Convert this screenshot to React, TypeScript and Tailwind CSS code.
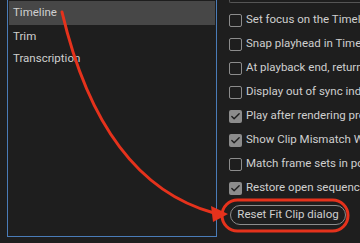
import { Check } from 'lucide-react';

const options = [
    { label: 'Set focus on the Timeline when performing Insert/Overwrite', checked: false },
    { label: 'Snap playhead in Timeline when Snap is enabled', checked: false },
    { label: 'At playback end, return to beginning when restarting playback', checked: false },
    { label: 'Display out of sync indicators for unlinked clips', checked: false },
    { label: 'Play after rendering previews', checked: true },
    { label: 'Show Clip Mismatch Warning dialog', checked: true },
    { label: 'Match frame sets in point', checked: false },
    { label: 'Restore open sequences on project open', checked: true },
];

function CheckBox({ checked }: { checked: boolean }) {
    if (checked) {
        return (
            <div className="w-[13px] h-[13px] shrink-0 rounded-[2px] bg-[#8c8c8c] flex items-center justify-center">
                <Check className="w-[11px] h-[11px] text-[#1e1e1e]" strokeWidth={3} />
            </div>
        );
    }
    return <div className="w-[13px] h-[13px] shrink-0 rounded-[2px] border border-[#8c8c8c]" />;
}

export default function App() {
    return (
        <div className="relative w-[360px] h-[243px] overflow-hidden bg-[#1e1e1e] flex font-['Roboto',sans-serif] text-[11.5px] text-[#cfcfcf]">
            {/* left list panel */}
            <div className="shrink-0 ml-[7px] w-[210px] h-[237px] border-l border-r border-b border-[#4a7cb8] pl-px pr-px pt-px">
                <div className="h-[24px] bg-[#474747] flex items-center pl-[4px]">Timeline</div>
                <div className="h-[22px] mt-px flex items-center pl-[4px]">Trim</div>
                <div className="h-[22px] flex items-center pl-[4px]">Transcription</div>
            </div>

            {/* right settings */}
            <div className="ml-[12px] flex-1 min-w-0 flex flex-col">
                <div className="h-[3px] border-l border-b border-[#555] rounded-bl-[2px]" />
                <div className="mt-[5px] flex flex-col">
                    {options.map((o) => (
                        <div key={o.label} className="h-[24px] flex items-center gap-[4px] whitespace-nowrap">
                            <CheckBox checked={o.checked} />
                            <span>{o.label}</span>
                        </div>
                    ))}
                </div>
                <button className="mt-[5px] ml-px w-[116px] h-[20px] shrink-0 rounded-full border border-[#8c8c8c] text-[11.5px] text-[#cfcfcf] flex items-center justify-center whitespace-nowrap">
                    Reset Fit Clip dialog
                </button>
            </div>

            {/* red annotation */}
            <svg className="absolute inset-0 pointer-events-none" width="360" height="243" viewBox="0 0 360 243">
                <path d="M62 12 C 85 110, 130 190, 214 213" fill="none" stroke="#e5321c" strokeWidth="3" strokeLinecap="round" />
                <polygon points="228,214 211,206 213,222" fill="#e5321c" />
                <rect x="222" y="200" width="126" height="31" rx="15.5" fill="none" stroke="#e5321c" strokeWidth="3" />
            </svg>
        </div>
    );
}
